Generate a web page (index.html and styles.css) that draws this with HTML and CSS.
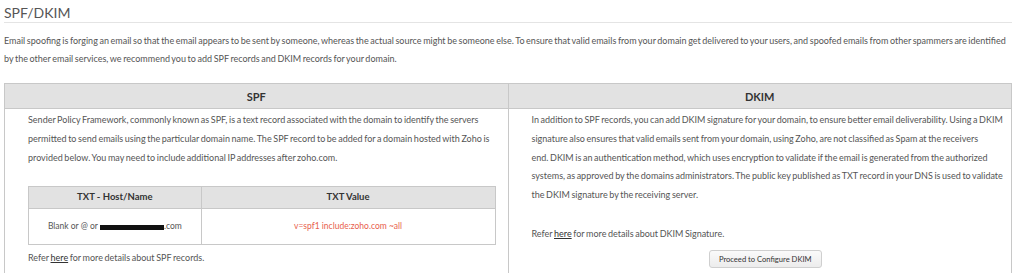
FILE: index.html
```html
<!DOCTYPE html>
<html>
<head>
    <title>SPF/DKIM</title>
    <link rel="stylesheet" href="styles.css">
</head>
<body>
    <div class="page">
        <h2 class="page-title">SPF/DKIM</h2>
        <p class="intro">Email spoofing is forging an email so that the email appears to be sent by someone, whereas the actual source might be someone else. To ensure that valid emails from your domain get delivered to your users, and spoofed emails from other spammers are identified by the other email services, we recommend you to add SPF records and DKIM records for your domain.</p>

        <table class="auth-table">
            <tr>
                <th>SPF</th>
                <th>DKIM</th>
            </tr>
            <tr>
                <td class="spf-cell">
                    <p>Sender Policy Framework, commonly known as SPF, is a text record associated with the domain to identify the servers permitted to send emails using the particular domain name. The SPF record to be added for a domain hosted with Zoho is provided below. You may need to include additional IP addresses after zoho.com.</p>
                    <table class="record-table">
                        <tr>
                            <th class="host-col">TXT - Host/Name</th>
                            <th>TXT Value</th>
                        </tr>
                        <tr>
                            <td>Blank or @ or <span class="redacted"></span>.com</td>
                            <td class="value">v=spf1 include:zoho.com ~all</td>
                        </tr>
                    </table>
                    <p class="refer">Refer <a href="#">here</a> for more details about SPF records.</p>
                </td>
                <td class="dkim-cell">
                    <p>In addition to SPF records, you can add DKIM signature for your domain, to ensure better email deliverability. Using a DKIM signature also ensures that valid emails sent from your domain, using Zoho, are not classified as Spam at the receivers end.&nbsp;DKIM is an authentication method, which uses encryption to validate if the email is generated from the authorized systems, as approved by the domains administrators. The public key published as TXT record in your DNS is used to validate the DKIM signature by the receiving server.</p>
                    <p class="refer dkim-refer">Refer <a href="#">here</a> for more details about DKIM Signature.</p>
                    <div class="actions">
                        <button>Proceed to Configure DKIM</button>
                    </div>
                </td>
            </tr>
        </table>
    </div>
</body>
</html>
```

FILE: styles.css
```css
body {
    margin: 0;
    font-family: Lato, "Liberation Sans", sans-serif;
    color: #555;
    background: #fff;
}
.page {
    padding: 0 12px 0 4px;
}
.page-title {
    margin: 0;
    padding-top: 4px;
    padding-bottom: 1px;
    font-size: 14px;
    line-height: 17px;
    font-weight: normal;
    color: #555;
    border-bottom: 1px solid #e4e4e4;
}
.intro {
    margin: 9px 0 15px;
    font-size: 9px;
    line-height: 18px;
    word-spacing: -0.7px;
}
.auth-table {
    width: 100%;
    border-collapse: collapse;
    border: 1px solid #c8c8c8;
}
.auth-table > tbody > tr > th {
    width: 50%;
    height: 24px;
    padding: 0;
    background: #e2e2e2;
    border: 1px solid #c8c8c8;
    font-size: 11px;
    font-weight: bold;
    color: #333;
}
.auth-table > tbody > tr > td {
    vertical-align: top;
    padding: 2px 12px 8px 23px;
    border: 1px solid #c8c8c8;
    font-size: 9px;
    line-height: 18.8px;
    word-spacing: -0.7px;
}
.auth-table > tbody > tr > td.dkim-cell {
    padding-right: 7px;
}
.auth-table p {
    margin: 0;
}
.record-table {
    width: 100%;
    margin-top: 19px;
    border-collapse: collapse;
    border: 1px solid #c8c8c8;
    word-spacing: 0;
}
.record-table th {
    height: 21px;
    padding: 0;
    background: #e2e2e2;
    border: 1px solid #c8c8c8;
    font-size: 9.5px;
    font-weight: bold;
    color: #333;
}
.record-table .host-col {
    width: 37%;
}
.record-table td {
    height: 35px;
    padding: 0;
    text-align: center;
    border: 1px solid #c8c8c8;
    font-size: 8.5px;
}
.record-table .value {
    color: #e8604c;
}
.redacted {
    display: inline-block;
    width: 64px;
    height: 5px;
    background: #111;
    vertical-align: middle;
}
.refer {
    margin-top: 4px !important;
}
.dkim-refer {
    margin-top: 20px !important;
}
.refer a {
    color: #333;
}
.actions {
    text-align: center;
    margin-top: 6px;
    padding-right: 5px;
    word-spacing: 0;
}
button {
    height: 18px;
    padding: 0 9px;
    font-family: Lato, "Liberation Sans", sans-serif;
    font-size: 7.6px;
    color: #333;
    background: linear-gradient(#fafafa, #ececec);
    border: 1px solid #cfcfcf;
    border-radius: 3px;
    cursor: pointer;
}
```
